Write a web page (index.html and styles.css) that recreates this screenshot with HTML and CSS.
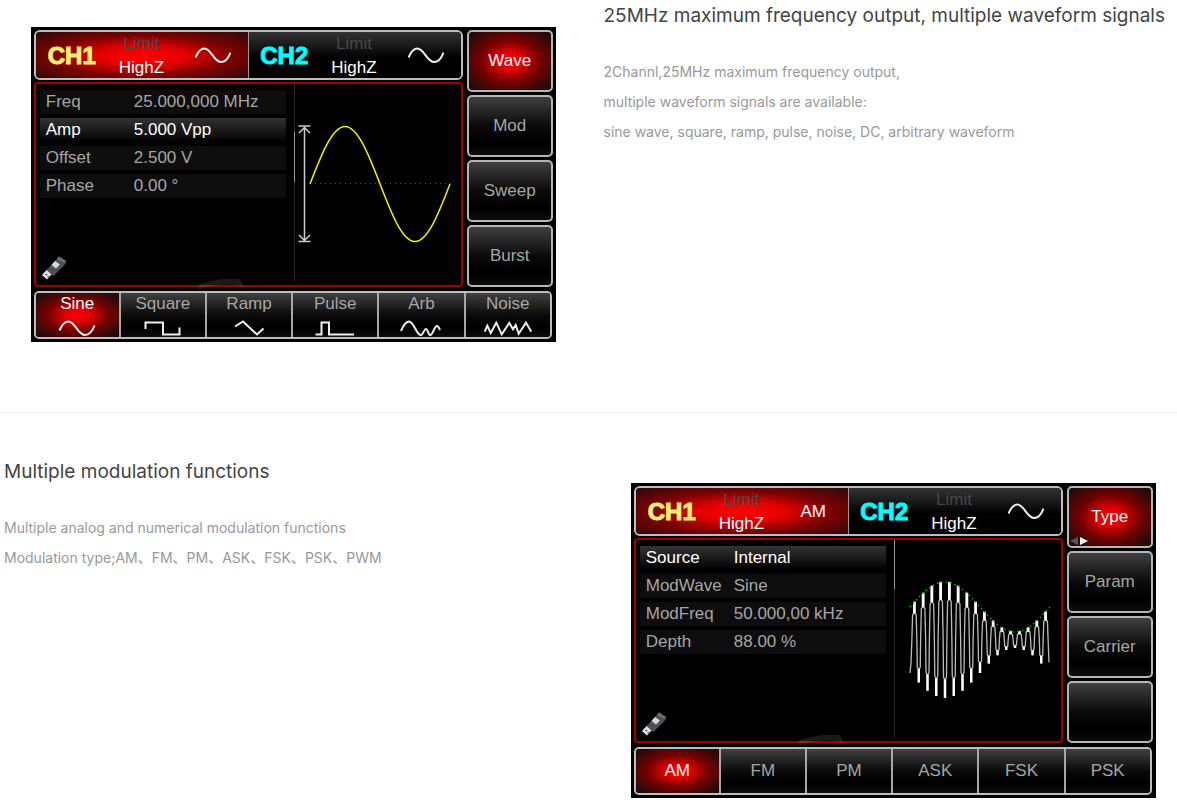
FILE: index.html
```html
<!DOCTYPE html>
<html lang="en">
<head>
    <meta charset="UTF-8">
    <meta name="viewport" content="width=device-width, initial-scale=1.0">
    <title>Function generator features</title>
    <link rel="stylesheet" href="styles.css">
</head>
<body>
    <svg class="defs" aria-hidden="true">
        <symbol id="icon-sine" viewBox="6 0 36 16">
            <path d="M6.5 10.5C9 4.5 12 1.5 15.5 1.5C22 1.5 25 15 32 15C36 15 39.5 11 41.5 5.5"/>
        </symbol>
        <symbol id="icon-usb" viewBox="0 0 24 24">
            <path fill="#4a5258" d="M17 0.5L24 5L23.500 8L11.500 20L4 14.500Z"/>
            <path fill="#6b747a" d="M17 0.500L24 5L22 7L15 2.500Z"/>
            <path fill="#d8d8d8" d="M13 5L18 8.500L14 12.500L9.500 9Z"/>
            <path fill="#e4e4e4" d="M4.500 14L9.500 18.500L5 23.500L0 19Z"/>
            <path fill="#555" d="M4 17.500L5.500 18.500L4.500 19.500L3 18.500ZM6 19.500L7.500 20.500L6.500 21.500L5 20.500Z"/>
        </symbol>
        <symbol id="icon-arc" viewBox="0 0 48 12">
            <path fill="#fff" fill-opacity="0.1" d="M0 6C12 1 26 -1 42 0L47 11C44 8 42 6 36 6C22 5 10 7 1 11Z"/>
        </symbol>
    </svg>

    <section class="feature">
        <div class="feature-media">
            <div class="screen">
                <div class="screen-main">
                    <div class="channels">
                        <div class="channel active">
                            <strong class="ch1">CH1</strong>
                            <div class="load"><span>Limit</span><b>HighZ</b></div>
                            <svg class="mode line"><use href="#icon-sine"/></svg>
                        </div>
                        <div class="channel">
                            <strong class="ch2">CH2</strong>
                            <div class="load"><span>Limit</span><b>HighZ</b></div>
                            <svg class="mode line"><use href="#icon-sine"/></svg>
                        </div>
                    </div>
                    <div class="display">
                        <div class="settings">
                            <dl>
                                <div><dt>Freq</dt><dd>25.000,000 MHz</dd></div>
                                <div class="selected"><dt>Amp</dt><dd>5.000 Vpp</dd></div>
                                <div><dt>Offset</dt><dd>2.500 V</dd></div>
                                <div><dt>Phase</dt><dd>0.00 °</dd></div>
                            </dl>
                            <svg class="usb"><use href="#icon-usb"/></svg>
                        </div>
                        <svg class="plot" viewBox="0 0 168 200">
                            <path stroke="#2a2a2a" d="M1.500 0V198"/>
                            <path stroke="#999" d="M1.500 48V98"/>
                            <path stroke="#ccc" stroke-width="1.500" d="M11.500 43V157M5.500 42H17.500M5.500 157.500H17.500M6 49L11.500 43.500L17 49M6 151L11.500 156.500L17 151"/>
                            <path stroke="#555" stroke-dasharray="1 4" d="M17 99.500H158"/>
                            <path stroke="#f2f200" stroke-width="1.500" d="M17 100C28.400 70.500 39.300 42.500 52 42.500C64.700 42.500 75.600 70.500 87 100C98.400 129.500 109.300 157.500 122 157.500C134.700 157.500 145.600 129.500 157 100"/>
                        </svg>
                    </div>
                </div>
                <div class="side-keys">
                    <button class="active">Wave</button>
                    <button>Mod</button>
                    <button>Sweep</button>
                    <button>Burst</button>
                </div>
                <div class="soft-keys">
                    <button class="active">Sine
                        <svg class="line" viewBox="0 0 48 16"><path d="M6.500 10.500C9 4.500 12 1.500 15.500 1.500C22 1.500 25 15 32 15C36 15 39.500 11 41.500 5.500"/></svg>
                    </button>
                    <button>Square
                        <svg class="line" viewBox="0 0 48 16"><path d="M6.500 9V2.500H24V14.500H40.500V7.500"/></svg>
                    </button>
                    <button>Ramp
                        <svg class="line" viewBox="0 0 48 16"><path d="M10 6.500L18 1.500L32 14.500L38.500 8.500"/></svg>
                    </button>
                    <button>Pulse
                        <svg class="line" viewBox="0 0 48 16"><path d="M4.500 14.500H10.500V2.500H18V14.500H43"/></svg>
                    </button>
                    <button>Arb
                        <svg class="line" viewBox="0 0 48 16"><path d="M4 11C6 6 8 2 12 1.500C17 2 19 14 23.500 15.200C26 15.500 27 9 29 9C31 9 31 15 33.500 15.200C36 14 37.500 6 40 6C41.500 6 42 8 43 10"/></svg>
                    </button>
                    <button>Noise
                        <svg class="line" viewBox="0 0 48 16"><path d="M0.700 11.700L3.300 5.700L6.700 13L12.300 2.700L17.700 14.300L25.300 3L29 9.300L31.700 5L34.700 13.700L42 2.700L47.300 11.700"/></svg>
                    </button>
                </div>
                <svg class="arc"><use href="#icon-arc"/></svg>
            </div>
        </div>
        <div class="feature-text">
            <h2>25MHz maximum frequency output, multiple waveform signals</h2>
            <p>2Channl,25MHz maximum frequency output,<br>
            multiple waveform signals are available:<br>
            sine wave, square, ramp, pulse, noise, DC, arbitrary waveform</p>
        </div>
    </section>

    <section class="feature reverse">
        <div class="feature-text">
            <h2>Multiple modulation functions</h2>
            <p>Multiple analog and numerical modulation functions<br>
            Modulation type;AM、FM、PM、ASK、FSK、PSK、PWM</p>
        </div>
        <div class="feature-media">
            <div class="screen">
                <div class="screen-main">
                    <div class="channels">
                        <div class="channel active">
                            <strong class="ch1">CH1</strong>
                            <div class="load"><span>Limit</span><b>HighZ</b></div>
                            <span class="mode">AM</span>
                        </div>
                        <div class="channel">
                            <strong class="ch2">CH2</strong>
                            <div class="load"><span>Limit</span><b>HighZ</b></div>
                            <svg class="mode line"><use href="#icon-sine"/></svg>
                        </div>
                    </div>
                    <div class="display">
                        <div class="settings">
                            <dl>
                                <div class="selected"><dt>Source</dt><dd>Internal</dd></div>
                                <div><dt>ModWave</dt><dd>Sine</dd></div>
                                <div><dt>ModFreq</dt><dd>50.000,00 kHz</dd></div>
                                <div><dt>Depth</dt><dd>88.00 %</dd></div>
                            </dl>
                            <svg class="usb"><use href="#icon-usb"/></svg>
                        </div>
                        <svg class="plot" viewBox="0 0 168 200">
                            <path stroke="#2a2a2a" d="M1.500 0V198"/>
                            <path stroke="#999" d="M1.500 0V49"/>
                            <path id="amCarrier" stroke="#bbb" stroke-width="1.300"/>
                            <path id="amTips" stroke="#fff" stroke-width="2.500"/>
                            <path id="amEnvelope" stroke="#00b400" stroke-width="1.500" stroke-dasharray="1.500 3"/>
                        </svg>
                    </div>
                </div>
                <div class="side-keys">
                    <button class="active">Type
                        <svg class="pager" viewBox="0 0 18 8"><path fill="#555" d="M8 0V8L0 4Z"/><path fill="#fff" d="M10 0V8L18 4Z"/></svg>
                    </button>
                    <button>Param</button>
                    <button>Carrier</button>
                    <button aria-label="Empty"></button>
                </div>
                <div class="soft-keys">
                    <button class="active">AM</button>
                    <button>FM</button>
                    <button>PM</button>
                    <button>ASK</button>
                    <button>FSK</button>
                    <button>PSK</button>
                </div>
                <svg class="arc"><use href="#icon-arc"/></svg>
            </div>
        </div>
    </section>

    <script src="script.js"></script>
</body>
</html>
```

FILE: styles.css
```css
body {
    margin: 0;
    background: #fff;
    font-family: Inter, "Noto Sans CJK SC", sans-serif;
}
.defs {
    display: none;
}
.feature {
    display: grid;
    grid-template-columns: 1fr 1fr;
    padding-bottom: 70px;
    border-bottom: 1px solid #f2f2f2;
}
.feature.reverse {
    padding-top: 43px;
    padding-bottom: 0;
    border-bottom: 0;
}
.feature-media {
    display: flex;
    justify-content: center;
    padding-top: 27px;
    padding-right: 2px;
}
.feature-text {
    padding-left: 15px;
}
.reverse .feature-text {
    padding-left: 4px;
}
.reverse .feature-media {
    padding-left: 23px;
}
h2 {
    margin: 0 0 25px;
    font-size: 19px;
    line-height: 32px;
    font-weight: 400;
    color: #444;
}
p {
    margin: 0;
    font-size: 14px;
    line-height: 30px;
    font-weight: 400;
    color: #999;
}

/* instrument screen */
.screen {
    position: relative;
    box-sizing: border-box;
    width: 100%;
    max-width: 525px;
    padding: 3px;
    display: grid;
    grid-template-columns: 1fr 86px;
    gap: 4px;
    background: #000;
    color: #a6a6a6;
    font-family: "Liberation Sans", Arial, sans-serif;
    font-size: 17px;
}
.screen-main {
    display: flex;
    flex-direction: column;
    gap: 2px;
}
.channels {
    display: grid;
    grid-template-columns: 1fr 1fr;
    height: 46px;
    border: 2px solid #bdbdbd;
    border-radius: 6px;
    overflow: hidden;
}
.channel {
    display: flex;
    align-items: center;
    gap: 23px;
    padding-left: 12px;
    background: linear-gradient(#333, #000 55%);
}
.channel + .channel {
    padding-left: 11px;
    border-left: 1px solid #999;
}
.channel.active {
    background: radial-gradient(ellipse at 50% 50%, #f00 0, #e60000 28%, #7a0202 60%, #2c0a0a 100%);
}
.channel strong {
    font-size: 24px;
    -webkit-text-stroke: 1px;
}
.ch1 {
    color: #fff06e;
}
.ch2 {
    color: #0ff;
}
.load {
    display: flex;
    flex-direction: column;
    align-items: center;
    line-height: 24px;
}
.load span {
    color: #484848;
}
.load b {
    font-weight: normal;
    color: #fff;
}
.mode {
    width: 36px;
    height: 16px;
    margin-left: 8px;
    line-height: 16px;
    text-align: center;
    color: #fff;
}
.line {
    fill: none;
    stroke: #eee;
    stroke-width: 2px;
}
.channel .line {
    margin-bottom: 3px;
}
.display {
    flex: 1;
    display: flex;
    justify-content: space-between;
    border: 2px solid #9c0000;
    border-radius: 4px;
}
.settings {
    display: flex;
    flex-direction: column;
    justify-content: space-between;
    width: 246px;
    padding: 6px 0 5px 4px;
}
dl {
    display: flex;
    flex-direction: column;
    gap: 4px;
    margin: 0;
}
dl div {
    display: flex;
    padding-left: 6px;
    line-height: 24px;
    background: #0d0d0d;
}
dl .selected {
    color: #fff;
    background: linear-gradient(#333, #000);
}
dt {
    width: 88px;
}
dd {
    margin: 0;
}
.usb {
    width: 24px;
    height: 24px;
    margin-left: 2px;
}
.plot {
    width: 168px;
    height: 200px;
    fill: none;
}
.side-keys {
    display: grid;
    grid-template-rows: repeat(4, 62px);
    gap: 3px;
}
button {
    padding: 0;
    border: 0;
    font: inherit;
    color: inherit;
    background: linear-gradient(#404040, #0a0a0a 50%, #000 80%, #0c0c0c);
    cursor: pointer;
}
.side-keys button {
    position: relative;
    border: 2px solid #b5b5b5;
    border-radius: 5px;
}
button.active {
    color: #fff;
    background: radial-gradient(ellipse at 50% 50%, #f00 0, #e00000 22%, #7a0000 50%, #2c0a0a 85%, #1c0808 100%);
}
.pager {
    position: absolute;
    left: 1px;
    bottom: 1px;
    width: 18px;
    height: 8px;
}
.soft-keys {
    grid-column: 1 / -1;
    display: grid;
    grid-template-columns: 83px repeat(5, 1fr);
    height: 44px;
    margin-right: 1px;
    border: 2px solid #bdbdbd;
    border-radius: 5px;
    overflow: hidden;
}
.soft-keys button {
    display: flex;
    flex-direction: column;
    align-items: center;
    justify-content: center;
    gap: 6px;
    line-height: 20px;
}
.soft-keys button + button {
    border-left: 2px solid #a8a8a8;
}
.soft-keys svg {
    width: 48px;
    height: 16px;
}
.arc {
    position: absolute;
    left: 167px;
    bottom: 51px;
    width: 48px;
    height: 12px;
}
```

FILE: script.js
```js
// AM waveform: 16 carrier cycles under one period of the modulating sine
const left = 17;
const mid = 100;
const span = 140;
const cycles = 16;
const period = span / cycles;

function envelope(x) {
    return 33 + 25 * Math.sin(2 * Math.PI * x / span);
}

let carrier = `M${left} ${mid + envelope(0)}L${left + 1} ${mid + envelope(0) * 0.7}`;
let tips = '';
for (let i = 0; i < cycles; i++) {
    const x = left + (i + 0.5) * period;
    const t = left + (i + 1) * period;
    const a = envelope(x - left);
    const b = envelope(t - left);

    // upper half
    carrier += `L${x - 2.5} ${mid}L${x - 1.8} ${mid - a * 0.67}L${x - 0.7} ${mid - a * 0.7}V${mid - a}`;
    carrier += `H${x + 0.7}V${mid - a * 0.7}L${x + 1.8} ${mid - a * 0.67}L${x + 2.5} ${mid}`;
    tips += `M${x} ${mid - a}V${mid - a * 0.7}`;

    // lower half, the last one is cut by the right edge
    if (i < cycles - 1) {
        carrier += `L${t - 1.5} ${mid + b * 0.64}L${t} ${mid + b * 0.7}V${mid + b}V${mid + b * 0.7}L${t + 1.5} ${mid + b * 0.64}`;
        tips += `M${t} ${mid + b * 0.68}V${mid + b}`;
    } else {
        carrier += `L${t - 1} ${mid + b * 0.68}`;
    }
}

let dots = `M${left} ${mid - envelope(0)}`;
for (let x = 2; x <= span; x += 2) {
    dots += `L${left + x} ${mid - envelope(x)}`;
}

document.getElementById('amCarrier').setAttribute('d', carrier);
document.getElementById('amTips').setAttribute('d', tips);
document.getElementById('amEnvelope').setAttribute('d', dots);
```
